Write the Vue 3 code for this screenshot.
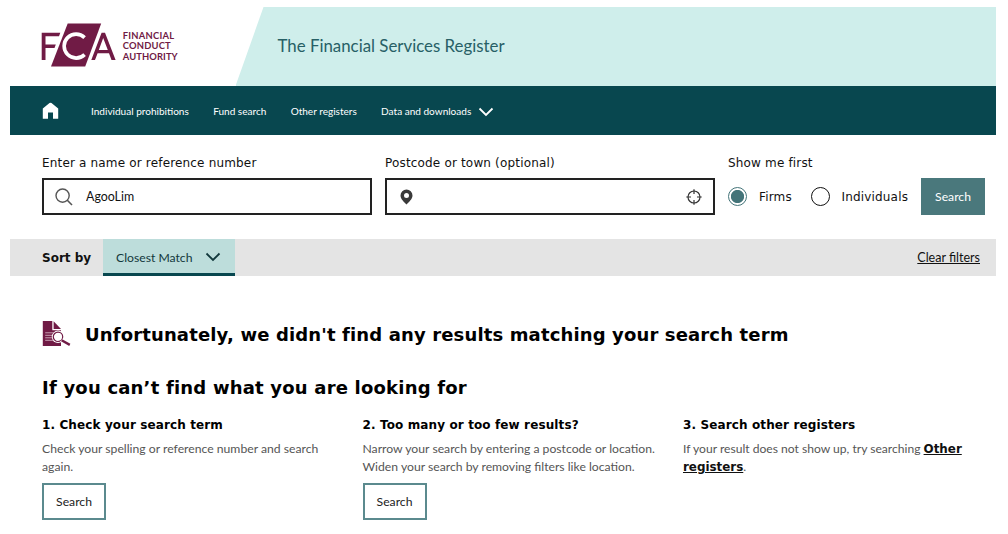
<template>
  <div class="page">
    <header class="header">
      <svg class="logo" width="140" height="48" viewBox="40 21 140 48">
        <path d="M67.7 23.4H101.2L85.2 66.6H51Z" fill="#701b45" />
        <path d="M41.7 32.7H60.3L59 36.2H45.5V44.6H55.8L54.5 48H45.5V60H41.7Z" fill="#701b45" />
        <path d="M84.6 37.6A12 12 0 1 0 84.6 54.6" fill="none" stroke="#fff" stroke-width="3.6" />
        <path d="M101.6 32.7H105L115.6 60H111.5L109 53.2H97.6L95 60H91.3ZM103.2 38L98.8 50H107.8Z" fill="#701b45" fill-rule="evenodd" />
        <g class="logo-text">
          <text x="122.7" y="38.6" textLength="51.5">FINANCIAL</text>
          <text x="122.7" y="49.1" textLength="48">CONDUCT</text>
          <text x="122.7" y="59.6" textLength="55">AUTHORITY</text>
        </g>
      </svg>
      <div class="banner"><span class="banner-title">The Financial Services Register</span></div>
    </header>

    <nav class="nav">
      <svg class="home" width="17" height="18" viewBox="0 0 17 18">
        <path d="M8.5 .7Q9 .7 9.5 1.1L16.2 6.6V16.8H11V10.6H6V16.8H.8V6.6L7.5 1.1Q8 .7 8.5 .7Z" fill="#fff" />
      </svg>
      <a v-for="link in links" :key="link">{{ link }}</a>
      <svg class="nav-chevron" width="16" height="10" viewBox="0 0 16 10">
        <path d="M1.5 1.5L8 8L14.5 1.5" fill="none" stroke="#fff" stroke-width="1.8" />
      </svg>
    </nav>

    <form class="search" @submit.prevent>
      <div class="field">
        <label for="name">Enter a name or reference number</label>
        <div class="box">
          <svg width="18" height="18" viewBox="0 0 18 18">
            <circle cx="7.6" cy="7.6" r="6.6" fill="none" stroke="#555" stroke-width="1.4" />
            <path d="M12.3 12.3L17 17" stroke="#555" stroke-width="1.6" />
          </svg>
          <input id="name" v-model="name" type="text" />
        </div>
      </div>
      <div class="field">
        <label for="town">Postcode or town (optional)</label>
        <div class="box town">
          <svg width="13" height="16" viewBox="0 0 13 16">
            <path d="M6.5 .4A6 6 0 0 0 .5 6.4C.5 10 4 12.6 6.5 15.6C9 12.6 12.5 10 12.5 6.4A6 6 0 0 0 6.5 .4ZM6.5 4A2.5 2.5 0 1 1 6.5 9A2.5 2.5 0 1 1 6.5 4Z" fill="#3a3a3a" fill-rule="evenodd" />
          </svg>
          <input id="town" v-model="town" type="text" />
          <svg width="16" height="16" viewBox="0 0 16 16">
            <circle cx="8" cy="8" r="6" fill="none" stroke="#333" stroke-width="1.2" />
            <path d="M8 .3V5M8 11V15.7M.3 8H5M11 8H15.7" stroke="#333" stroke-width="1.2" />
          </svg>
        </div>
      </div>
      <div class="field">
        <span class="first-label">Show me first</span>
        <div class="radios">
          <span class="radio" :class="{ on: show === 'firms' }" @click="show = 'firms'"></span>
          <span class="firms">Firms</span>
          <span class="radio" :class="{ on: show === 'individuals' }" @click="show = 'individuals'"></span>
          <span class="individuals">Individuals</span>
        </div>
      </div>
      <button class="submit">Search</button>
    </form>

    <div class="sortbar">
      <span class="sort-label">Sort by</span>
      <button class="sort-btn">
        <span>Closest Match</span>
        <svg width="16" height="10" viewBox="0 0 16 10">
          <path d="M1.5 1.5L8 8L14.5 1.5" fill="none" stroke="#12383c" stroke-width="1.8" />
        </svg>
      </button>
      <a class="clear">Clear filters</a>
    </div>

    <main class="results">
      <div class="none">
        <svg width="30" height="28" viewBox="0 0 30 28">
          <path d="M.8 1H10.3V10.3H19V26H.8Z" fill="#701b45" />
          <path d="M11.6 1.3L19 9H11.6Z" fill="#701b45" />
          <path d="M3.2 12.8H11.5M3.2 15.3H10M3.2 17.8H10M3.2 20.3H11" stroke="#e0c4d0" stroke-width=".8" />
          <circle cx="16" cy="16.8" r="6.2" fill="#fff" />
          <circle cx="16" cy="16.8" r="4.7" fill="#fff" stroke="#701b45" stroke-width="1.2" />
          <path d="M18 21.8L20.8 18.6L28.6 24L27 26.2L21.5 23Z" fill="#fff" />
          <path d="M19.6 20.2L27.8 24.9" stroke="#701b45" stroke-width="2.4" />
        </svg>
        <h1>Unfortunately, we didn't find any results matching your search term</h1>
      </div>
      <h2>If you can’t find what you are looking for</h2>
      <div class="tips">
        <section>
          <h3>1. Check your search term</h3>
          <p>Check your spelling or reference number and search again.</p>
          <button class="outline">Search</button>
        </section>
        <section>
          <h3>2. Too many or too few results?</h3>
          <p>Narrow your search by entering a postcode or location. Widen your search by removing filters like location.</p>
          <button class="outline">Search</button>
        </section>
        <section>
          <h3>3. Search other registers</h3>
          <p class="tight">If your result does not show up, try searching <a>Other registers</a>.</p>
        </section>
      </div>
    </main>
  </div>
</template>

<script setup>
import { ref } from 'vue';
const links = ['Individual prohibitions', 'Fund search', 'Other registers', 'Data and downloads'];
const name = ref('AgooLim');
const town = ref('');
const show = ref('firms');
</script>

<style>
body {
  background: #fff;
  overflow: hidden;
}
</style>

<style scoped>
.page {
  box-sizing: border-box;
  width: 1008px;
  height: 534px;
  padding: 7px 12px 0 10px;
  overflow: hidden;
  font-family: Lato, sans-serif;
  color: #111;
  white-space: nowrap;
}
svg {
  display: block;
  flex: none;
}
button, input {
  font-family: inherit;
}
.header {
  display: flex;
  height: 79px;
}
.logo {
  margin: 14px 0 0 30px;
}
.logo-text {
  font-size: 9.4px;
  font-weight: 700;
  fill: #701b45;
}
.banner {
  display: flex;
  align-items: center;
  flex: 1;
  margin-left: 55.5px;
  padding: 0 0 2px 42px;
  background: #cfeeeb;
  clip-path: polygon(28px 0, 100% 0, 100% 100%, 0 100%);
}
.banner-title {
  font-size: 16.85px;
  color: #276066;
}
.nav {
  display: flex;
  align-items: center;
  box-sizing: border-box;
  height: 49px;
  padding-left: 32px;
  background: #08474f;
  color: #fff;
  font-size: 10.05px;
}
.nav a {
  margin-right: 24.3px;
}
.home {
  margin-right: 32px;
}
.nav-chevron {
  margin: 3px 0 0 -17.3px;
}
.search {
  display: flex;
  box-sizing: border-box;
  height: 104px;
  padding: 20px 0 0 32px;
}
.field {
  margin-right: 13px;
  font-family: "DejaVu Sans", sans-serif;
  font-size: 12px;
  letter-spacing: .17px;
}
.field label, .first-label {
  display: block;
  height: 23px;
  line-height: 16px;
}
.box {
  display: flex;
  align-items: center;
  box-sizing: border-box;
  width: 330px;
  height: 37px;
  padding: 0 11px;
  border: 2px solid #222;
}
.box input {
  flex: 1;
  min-width: 0;
  margin-left: 13px;
  padding: 0;
  border: 0;
  outline: 0;
  font-family: Lato, sans-serif;
  font-size: 12.4px;
  color: #111;
}
.town {
  padding-left: 13px;
}
.radios {
  display: flex;
  align-items: center;
  height: 37px;
}
.radio {
  box-sizing: border-box;
  width: 19px;
  height: 19px;
  border: 1.5px solid #111;
  border-radius: 50%;
}
.radio.on {
  border-color: #447479;
  background: radial-gradient(circle, #447479 6.2px, #fff 7px);
}
.firms {
  width: 51.5px;
  box-sizing: border-box;
  padding-left: 12px;
  margin-right: 12px;
}
.individuals {
  margin-left: 12px;
}
.submit {
  width: 64px;
  height: 37px;
  margin: 23px 11px 0 auto;
  padding: 0;
  border: 0;
  background: #4a787c;
  color: #fff;
  font-size: 12.2px;
}
.sortbar {
  display: flex;
  align-items: center;
  height: 37px;
  padding: 0 16px 0 32px;
  background: #e4e4e4;
}
.sort-label {
  width: 61px;
  font-family: "DejaVu Sans", sans-serif;
  font-size: 12px;
  font-weight: 700;
}
.sort-btn {
  display: flex;
  align-items: center;
  gap: 13px;
  box-sizing: border-box;
  width: 132px;
  height: 37px;
  padding: 2px 0 0 13px;
  border: 0;
  border-bottom: 3px solid #08474f;
  background: #bddddb;
  color: #12383c;
  font-size: 12.2px;
}
.clear {
  margin-left: auto;
  font-size: 12.5px;
  text-decoration: underline;
}
.results {
  padding: 43px 0 0 32px;
}
.none {
  display: flex;
  align-items: center;
  gap: 13px;
  height: 30px;
}
h1, h2, h3 {
  margin: 0;
  font-family: "DejaVu Sans", sans-serif;
  color: #000;
}
h1 {
  font-size: 18px;
  letter-spacing: .14px;
}
h2 {
  margin-top: 28px;
  font-size: 18px;
  line-height: 22px;
  letter-spacing: .2px;
}
.tips {
  display: grid;
  grid-template-columns: repeat(3, 300.5px);
  gap: 20px;
  margin-top: 18px;
}
h3 {
  font-size: 12px;
  line-height: 16px;
  letter-spacing: .12px;
}
p {
  margin: 7px 0 7px;
  font-size: 12.2px;
  line-height: 18px;
  color: #555;
  white-space: normal;
}
.tight {
  font-size: 12.1px;
}
p a {
  font-family: "DejaVu Sans", sans-serif;
  font-size: 11.9px;
  font-weight: 700;
  line-height: 1;
  color: #111;
  text-decoration: underline;
}
.outline {
  width: 64px;
  height: 37px;
  padding: 0;
  border: 2px solid #5b8a8e;
  background: #fff;
  color: #222;
  font-size: 12.2px;
}
</style>
